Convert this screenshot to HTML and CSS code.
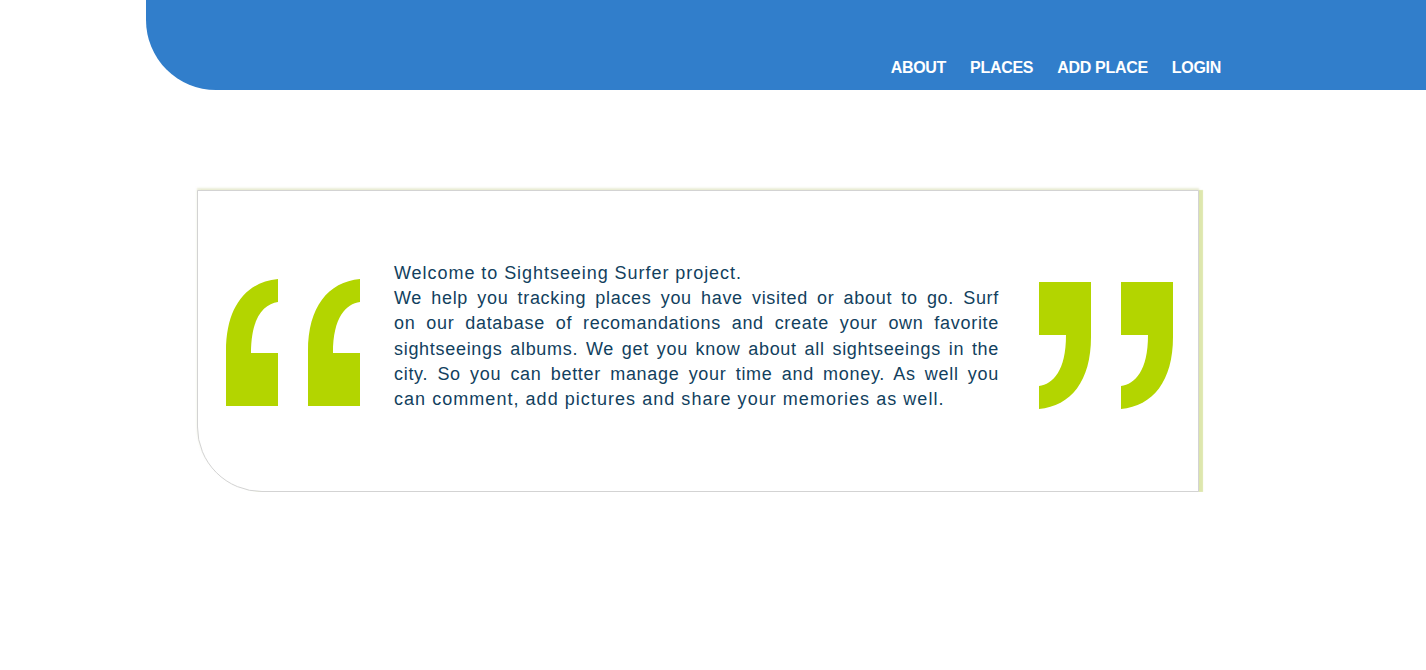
FILE: index.html
```html
<!DOCTYPE html>
<html lang="en">
<head>
<meta charset="utf-8">
<title>Sightseeing Surfer</title>
<link rel="stylesheet" href="styles.css">
</head>
<body>
<header class="topbar">
  <nav class="nav">
    <a class="nav-link" href="#">ABOUT</a>
    <a class="nav-link" href="#">PLACES</a>
    <a class="nav-link" href="#">ADD PLACE</a>
    <a class="nav-link" href="#">LOGIN</a>
  </nav>
</header>
<main class="main">
  <section class="card">
    <div class="quotes quotes-open">
      <svg class="q" viewBox="0 0 52 127" width="52" height="127"><path d="M52,0 L52,23 C38,25 25,38 25,74 L52,74 L52,127 L0,127 L0,72 C0,28 20,3 52,0 Z"/></svg>
      <svg class="q" viewBox="0 0 52 127" width="52" height="127"><path d="M52,0 L52,23 C38,25 25,38 25,74 L52,74 L52,127 L0,127 L0,72 C0,28 20,3 52,0 Z"/></svg>
    </div>
    <p class="intro">
      <span class="line">Welcome to Sightseeing Surfer project.</span>
      <span class="line line-j">We help you tracking places you have visited or about to go. Surf</span>
      <span class="line line-j">on our database of recomandations and create your own favorite</span>
      <span class="line line-j">sightseeings albums. We get you know about all sightseeings in the</span>
      <span class="line line-j">city. So you can better manage your time and money. As well you</span>
      <span class="line line-last">can comment, add pictures and share your memories as well.</span>
    </p>
    <div class="quotes quotes-close">
      <svg class="q" viewBox="0 0 52 127" width="52" height="127"><path transform="rotate(180 26 63.5)" d="M52,0 L52,23 C38,25 25,38 25,74 L52,74 L52,127 L0,127 L0,72 C0,28 20,3 52,0 Z"/></svg>
      <svg class="q" viewBox="0 0 52 127" width="52" height="127"><path transform="rotate(180 26 63.5)" d="M52,0 L52,23 C38,25 25,38 25,74 L52,74 L52,127 L0,127 L0,72 C0,28 20,3 52,0 Z"/></svg>
    </div>
  </section>
</main>
</body>
</html>
```
FILE: styles.css
```css
html, body {
  margin: 0;
  padding: 0;
  background: #ffffff;
}
body {
  font-family: "Liberation Sans", Arial, Helvetica, sans-serif;
}
.topbar {
  margin-left: 146px;
  height: 90px;
  background: #317ecb;
  border-bottom-left-radius: 70px;
  display: flex;
  justify-content: flex-end;
  align-items: flex-start;
  padding-right: 205px;
}
.nav {
  display: flex;
  gap: 24px;
  margin-top: 59px;
}
.nav-link {
  color: #ffffff;
  text-decoration: none;
  font-weight: bold;
  font-size: 16px;
  line-height: 18px;
  letter-spacing: -0.3px;
}
.main {
  padding-top: 100px;
  padding-left: 197px;
}
.card {
  box-sizing: border-box;
  width: 1002px;
  height: 302px;
  border: 1px solid #d3d3d3;
  border-bottom-left-radius: 65px;
  box-shadow: 4px 0 1px rgba(200, 215, 120, 0.6), 0 -2px 2px rgba(215, 220, 180, 0.5);
  display: flex;
  align-items: flex-start;
  background: #ffffff;
}
.quotes {
  display: flex;
  gap: 30px;
  flex: none;
}
.q {
  display: block;
  fill: #b3d500;
}
.quotes-open {
  margin-left: 28px;
  margin-top: 88px;
}
.quotes-close {
  margin-left: 40px;
  margin-top: 91px;
}
.intro {
  margin: 70px 0 0 34px;
  width: 605px;
  flex: none;
  font-size: 18px;
  line-height: 25.2px;
  letter-spacing: 0.95px;
  color: #123f5e;
}
.line {
  display: block;
  white-space: nowrap;
}
.line-j {
  white-space: normal;
  text-align: justify;
  text-align-last: justify;
  letter-spacing: 0.7px;
}
.line-last {
  letter-spacing: 1.04px;
}
```
